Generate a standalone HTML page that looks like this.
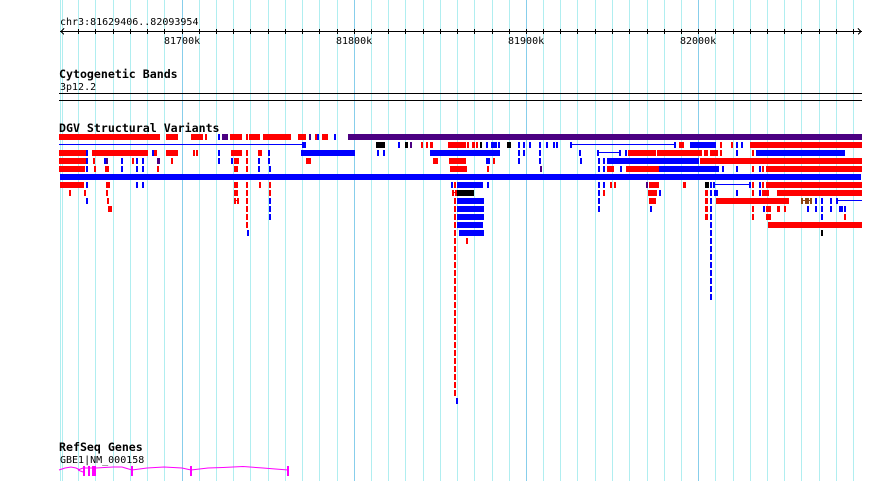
<!DOCTYPE html>
<html>
<head>
<meta charset="utf-8">
<style>
html,body{margin:0;padding:0;background:#fff;width:890px;height:481px;overflow:hidden}
svg{display:block}
text{font-family:"DejaVu Sans Mono","Liberation Mono",monospace;font-size:10px;fill:#000}
text.b{font-weight:bold;font-size:11.6px}
.r{stroke:#f00;stroke-width:6;fill:none}
.u{stroke:#00f;stroke-width:6;fill:none}
.k{stroke:#000;stroke-width:6;fill:none}
.p{stroke:#4b0082;stroke-width:6;fill:none}
.n{stroke:#8b4513;stroke-width:6;fill:none}
.t{stroke:#00f;stroke-width:1;fill:none}
</style>
</head>
<body>
<svg width="890" height="481" viewBox="0 0 890 481" xmlns="http://www.w3.org/2000/svg">
<g shape-rendering="crispEdges">
<path stroke="#b0eef0" stroke-width="1" fill="none" d="M60.5 0V481M62.5 0V481M78.5 0V481M95.5 0V481M113.5 0V481M130.5 0V481M147.5 0V481M164.5 0V481M199.5 0V481M216.5 0V481M233.5 0V481M250.5 0V481M268.5 0V481M285.5 0V481M302.5 0V481M319.5 0V481M337.5 0V481M371.5 0V481M388.5 0V481M405.5 0V481M423.5 0V481M440.5 0V481M457.5 0V481M474.5 0V481M492.5 0V481M509.5 0V481M543.5 0V481M560.5 0V481M577.5 0V481M595.5 0V481M612.5 0V481M629.5 0V481M647.5 0V481M664.5 0V481M681.5 0V481M715.5 0V481M733.5 0V481M750.5 0V481M767.5 0V481M784.5 0V481M801.5 0V481M819.5 0V481M836.5 0V481M853.5 0V481"/>
<path stroke="#87ceeb" stroke-width="1" fill="none" d="M182.5 0V481M354.5 0V481M526.5 0V481M698.5 0V481"/>
<path stroke="#000" stroke-width="1" fill="none" d="M60 31.5H862M78.5 29V34M95.5 29V34M113.5 29V34M130.5 29V34M147.5 29V34M164.5 29V34M182.5 29V34M199.5 29V34M216.5 29V34M233.5 29V34M250.5 29V34M268.5 29V34M285.5 29V34M302.5 29V34M319.5 29V34M337.5 29V34M354.5 29V34M371.5 29V34M388.5 29V34M405.5 29V34M423.5 29V34M440.5 29V34M457.5 29V34M474.5 29V34M492.5 29V34M509.5 29V34M526.5 29V34M543.5 29V34M560.5 29V34M577.5 29V34M595.5 29V34M612.5 29V34M629.5 29V34M647.5 29V34M664.5 29V34M681.5 29V34M698.5 29V34M715.5 29V34M733.5 29V34M750.5 29V34M767.5 29V34M784.5 29V34M801.5 29V34M819.5 29V34M836.5 29V34M853.5 29V34M64 28.5L61 31.5L64 34.5M858 28.5L861 31.5L858 34.5"/>
<path stroke="#000" stroke-width="1" fill="none" d="M59 93.5H862M59 100.5H862"/>

<!-- row 0 -->
<path class="r" d="M59 137H160M166 137H178M191 137H203M205 137H207M230 137H242M246 137H248M249 137H260M263 137H291M298 137H306M315 137H317M322 137H328"/>
<path class="u" d="M218 137H220M317 137H319M334 137H336"/>
<path class="p" d="M222 137H228M309 137H311M348 137H862"/>
<!-- row 1 -->
<path class="t" d="M59 144.5H302M570 144.5H674"/>
<path class="u" d="M302 145H306M398 145H400M486 145H488M491 145H497M498 145H500M518 145H520M523 145H525M529 145H531M539 145H541M546 145H548M553 145H555M556 145H558M570 145H572M674 145H676M690 145H716M736 145H738M741 145H743"/>
<path class="k" d="M376 145H385M405 145H408M480 145H482M507 145H511"/>
<path class="p" d="M410 145H412"/>
<path class="r" d="M421 145H423M426 145H428M430 145H433M448 145H466M467 145H469M472 145H475M476 145H478M679 145H684M720 145H722M731 145H733M750 145H862"/>
<!-- row 2 -->
<path class="t" d="M597 152.5H620"/>
<path class="r" d="M59 153H86M92 153H148M154 153H157M166 153H178M193 153H195M196 153H198M231 153H242M246 153H248M258 153H262M628 153H656M657 153H702M704 153H708M710 153H718M720 153H722M752 153H754"/>
<path class="u" d="M86 153H88M152 153H154M218 153H220M268 153H270M301 153H355M377 153H379M383 153H385M430 153H500M518 153H520M523 153H525M539 153H541M579 153H581M597 153H599M619 153H621M625 153H627M736 153H738M756 153H845"/>
<!-- row 3 -->
<path class="r" d="M59 161H86M93 161H95M132 161H134M171 161H173M234 161H239M246 161H248M306 161H311M433 161H438M449 161H466M493 161H495M700 161H862"/>
<path class="u" d="M86 161H88M104 161H106M121 161H123M136 161H138M142 161H144M218 161H220M231 161H233M258 161H260M268 161H270M486 161H490M518 161H520M539 161H541M580 161H582M598 161H600M603 161H605M607 161H699"/>
<path class="p" d="M106 161H108M157 161H160"/>
<!-- row 4 -->
<path class="r" d="M59 169H85M94 169H96M105 169H109M157 169H159M234 169H238M246 169H248M450 169H467M487 169H489M607 169H614M626 169H659M752 169H754M762 169H764M766 169H862"/>
<path class="u" d="M86 169H88M121 169H123M136 169H138M142 169H144M258 169H260M269 169H271M598 169H600M603 169H605M620 169H622M659 169H719M722 169H724M736 169H738M759 169H761"/>
<path class="p" d="M540 169H542"/>
<!-- row 5 -->
<path class="u" d="M60 177H861"/>
<!-- row 6 -->
<path class="t" d="M713 184.5H750"/>
<path class="r" d="M60 185H84M106 185H110M234 185H238M246 185H248M259 185H261M269 185H271M454 185H456M610 185H612M614 185H616M649 185H659M683 185H686M752 185H754M762 185H764M766 185H862"/>
<path class="u" d="M86 185H88M136 185H138M142 185H144M451 185H453M457 185H483M487 185H489M598 185H600M603 185H605M710 185H712M713 185H715M749 185H751M759 185H761"/>
<path class="p" d="M646 185H648"/>
<path class="k" d="M705 185H709"/>
<!-- row 7 -->
<path class="r" d="M69 193H71M84 193H86M106 193H108M234 193H238M246 193H248M269 193H271M452 193H454M455 193H457M603 193H605M648 193H657M705 193H708M752 193H754M762 193H769M777 193H862"/>
<path stroke="#f00" stroke-width="1" fill="none" d="M454 192.5H455"/>
<path class="k" d="M457 193H474"/>
<path class="u" d="M598 193H600M659 193H661M710 193H712M714 193H718M736 193H738M759 193H761"/>
<!-- row 8 -->
<path class="t" d="M836 200.5H862"/>
<path stroke="#f00" stroke-width="1" fill="none" d="M236 200.5H237"/>
<path class="r" d="M107 201H109M234 201H236M237 201H239M246 201H248M454 201H456M649 201H656M705 201H708M716 201H789"/>
<path class="u" d="M86 201H88M269 201H271M457 201H484M598 201H600M710 201H712M815 201H817M821 201H823M830 201H832M836 201H838"/>
<path class="n" d="M801 201H803M805 201H809M810 201H812"/>
<path stroke="#8b4513" stroke-width="1" fill="none" d="M803 200.5H810"/>
<!-- row 9 -->
<path class="r" d="M108 209H112M246 209H248M454 209H456M705 209H708M752 209H754M766 209H771M777 209H780M784 209H786"/>
<path class="u" d="M269 209H271M457 209H484M598 209H600M650 209H652M710 209H712M763 209H765M807 209H809M815 209H817M821 209H823M830 209H832M839 209H843M844 209H846"/>
<!-- row 10 -->
<path class="r" d="M246 217H248M454 217H456M705 217H708M752 217H754M766 217H771M844 217H846"/>
<path class="u" d="M269 217H271M457 217H484M710 217H712M821 217H823"/>
<!-- row 11 -->
<path class="r" d="M246 225H248M454 225H456M768 225H862"/>
<path class="u" d="M457 225H483M710 225H712"/>
<!-- row 12 -->
<path class="u" d="M247 233H249M459 233H484M710 233H712"/>
<path class="r" d="M454 233H456"/>
<path class="k" d="M821 233H823"/>
<!-- row 13 -->
<path class="r" d="M454 241H456M466 241H468"/>
<path class="u" d="M710 241H712"/>
<!-- tall stacks -->
<path class="r" d="M454 249H456M454 257H456M454 265H456M454 273H456M454 281H456M454 289H456M454 297H456M454 305H456M454 313H456M454 321H456M454 329H456M454 337H456M454 345H456M454 353H456M454 361H456M454 369H456M454 377H456M454 385H456M454 393H456"/>
<path class="u" d="M710 249H712M710 257H712M710 265H712M710 273H712M710 281H712M710 289H712M710 297H712M456 401H458"/>
<!-- gene bars -->
<path stroke="#f0f" stroke-width="2" fill="none" d="M84 466V476M89 466V476M93 466V476M95 466V476M132 466V476M191 466V476M288 466V476"/>
</g>
<path stroke="#f0f" stroke-width="1" fill="none" d="M59 470L65 468L71 467L76 468L80 470M78 470L83 468M78 470L83 472M85 468L96 468M96 468L113 467L122 467L132 470L147 468L164 467L182 468L191 470L208 468L223 467.500L243 466.500L263 468L288 470"/>

<text x="60" y="25">chr3:81629406..82093954</text>
<text x="164" y="44">81700k</text>
<text x="336" y="44">81800k</text>
<text x="508" y="44">81900k</text>
<text x="680" y="44">82000k</text>
<text class="b" x="59" y="78">Cytogenetic Bands</text>
<text x="60" y="90">3p12.2</text>
<text class="b" x="59" y="132">DGV Structural Variants</text>
<text class="b" x="59" y="451">RefSeq Genes</text>
<text x="60" y="463">GBE1|NM_000158</text>
</svg>
</body>
</html>
